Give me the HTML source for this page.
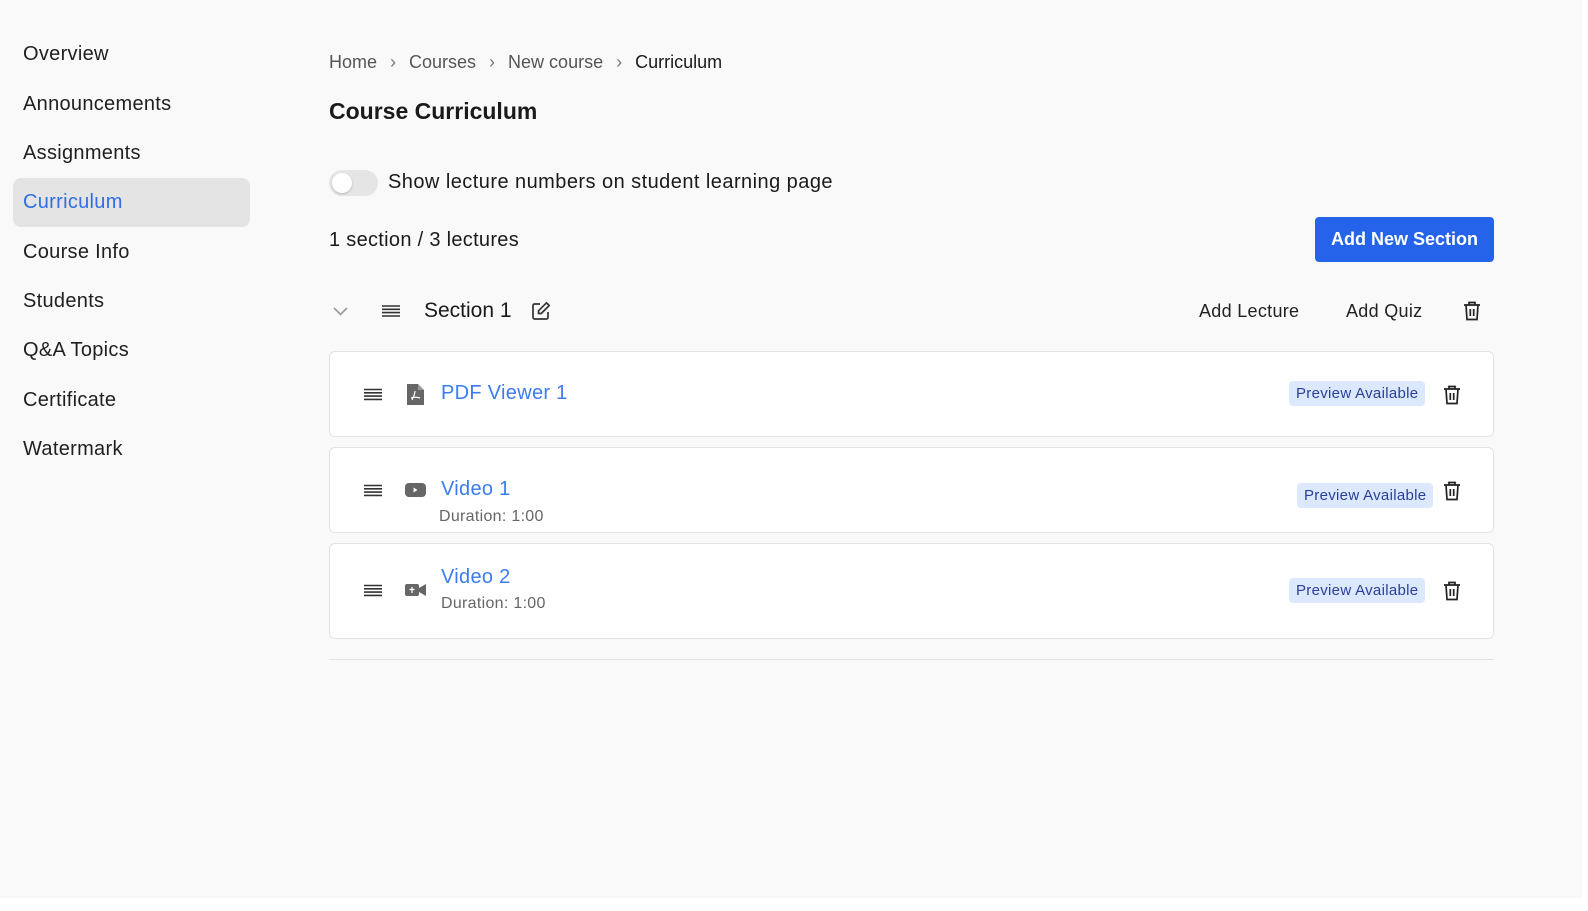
<!DOCTYPE html>
<html><head><meta charset="utf-8"><style>
*{box-sizing:border-box;margin:0;padding:0}
html,body{width:1588px;height:911px;background:#fff;font-family:"Liberation Sans",sans-serif;color:#1a1a1a;overflow:hidden}
#bg{position:absolute;left:0;top:0;width:1582px;height:898px;background:#f9f9f9}
.a{position:absolute;white-space:nowrap}
.nav{left:23px;font-size:20px;color:#1f1f1f;letter-spacing:0.3px}
.card{position:absolute;left:329px;width:1165px;background:#fff;border:1px solid #e3e3e3;border-radius:6px}
.badge{position:absolute;background:#dbe8fd;color:#2a3f9a;font-size:15px;padding:4px 7px;border-radius:4px;letter-spacing:0.3px}
.blue{color:#3b7cf0;letter-spacing:0.3px}
.gray{color:#666;letter-spacing:0.3px}
</style></head><body>
<div id="bg"></div>
<div class="a nav" style="top:43px">Overview</div>
<div class="a nav" style="top:93px">Announcements</div>
<div class="a nav" style="top:142px">Assignments</div>
<div class="a" style="left:13px;top:178px;width:237px;height:49px;background:#e4e4e4;border-radius:8px"></div>
<div class="a nav" style="top:191px;color:#2f6fe0">Curriculum</div>
<div class="a nav" style="top:241px">Course Info</div>
<div class="a nav" style="top:290px">Students</div>
<div class="a nav" style="top:339px">Q&amp;A Topics</div>
<div class="a nav" style="top:389px">Certificate</div>
<div class="a nav" style="top:438px">Watermark</div>

<div class="a" style="left:329px;top:52px;font-size:18px;color:#555">Home <span style="margin:0 8px;color:#777">›</span> Courses <span style="margin:0 8px;color:#777">›</span> New course <span style="margin:0 8px;color:#777">›</span> <span style="color:#1a1a1a">Curriculum</span></div>
<div class="a" style="left:329px;top:98px;font-size:23px;font-weight:bold">Course Curriculum</div>

<div class="a" style="left:329px;top:170px;width:49px;height:26px;border-radius:13px;background:#e5e5e5"></div>
<div class="a" style="left:332px;top:173px;width:20px;height:20px;border-radius:10px;background:#fff;box-shadow:0 1px 2px rgba(0,0,0,.2)"></div>
<div class="a" style="left:388px;top:171px;font-size:20px;letter-spacing:0.45px">Show lecture numbers on student learning page</div>
<div class="a" style="left:329px;top:229px;font-size:20px;letter-spacing:0.3px">1 section / 3 lectures</div>
<div class="a" style="left:1315px;top:217px;width:179px;height:45px;background:#2563eb;border-radius:4px;color:#fff;font-size:18px;font-weight:bold;text-align:center;line-height:45px">Add New Section</div>

<svg class="a" style="left:332px;top:305px" width="17" height="12"><path d="M2 3l6.5 6.5L15 3" stroke="#999" stroke-width="1.6" fill="none"/></svg>
<svg class="a" style="left:382px;top:304px" width="18" height="14"><path d="M0 2h18M0 5.3h18M0 8.6h18M0 12h18" stroke="#333" stroke-width="1.6"/></svg>
<div class="a" style="left:424px;top:299px;font-size:21px">Section 1</div>
<svg class="a" style="left:531px;top:301px" width="20" height="20" viewBox="0 0 20 20"><path d="M9 3H3.5a1.5 1.5 0 0 0-1.5 1.5v12a1.5 1.5 0 0 0 1.5 1.5h12a1.5 1.5 0 0 0 1.5-1.5V11" stroke="#333" stroke-width="1.7" fill="none"/><path d="M15.5 1.8l2.7 2.7-8 8H7.5V9.8z" stroke="#333" stroke-width="1.7" fill="none" stroke-linejoin="round"/></svg>
<div class="a" style="left:1199px;top:301px;font-size:18px;color:#222;letter-spacing:0.3px">Add Lecture</div>
<div class="a" style="left:1346px;top:301px;font-size:18px;color:#222;letter-spacing:0.3px">Add Quiz</div>
<svg class="a" style="left:1463px;top:301px" width="18" height="20" viewBox="0 0 18 20"><path d="M1 4h16M6 4V1.5h6V4M3 4l1 14.5h10L15 4M7.3 8v7M10.7 8v7" stroke="#222" stroke-width="1.7" fill="none"/></svg>

<div class="card" style="top:351px;height:86px"></div>
<div class="card" style="top:447px;height:86px"></div>
<div class="card" style="top:543px;height:96px"></div>

<svg class="a" style="left:364px;top:388px" width="18" height="13"><path d="M0 1.5h18M0 4.8h18M0 8.1h18M0 11.4h18" stroke="#333" stroke-width="1.6"/></svg>
<svg class="a" style="left:407px;top:384px" width="17" height="21" viewBox="0 0 17 21"><path d="M0 0h11l6 6v15H0z" fill="#666"/><path d="M11 0v6h6" fill="#999"/><path d="M5 16c2-4 3-7 3-9M4 14c3-1 6-1 9 0" stroke="#fff" stroke-width="1.2" fill="none"/></svg>
<div class="a blue" style="left:441px;top:382px;font-size:20px">PDF Viewer 1</div>
<div class="badge" style="left:1289px;top:381px">Preview Available</div>
<svg class="a" style="left:1443px;top:385px" width="18" height="20" viewBox="0 0 18 20"><path d="M1 4h16M6 4V1.5h6V4M3 4l1 14.5h10L15 4M7.3 8v7M10.7 8v7" stroke="#222" stroke-width="1.7" fill="none"/></svg>

<svg class="a" style="left:364px;top:484px" width="18" height="13"><path d="M0 1.5h18M0 4.8h18M0 8.1h18M0 11.4h18" stroke="#333" stroke-width="1.6"/></svg>
<svg class="a" style="left:405px;top:483px" width="21" height="14" viewBox="0 0 21 14"><rect width="21" height="14" rx="4" fill="#666"/><path d="M8.5 4.5v5l4-2.5z" fill="#fff"/></svg>
<div class="a blue" style="left:441px;top:478px;font-size:20px">Video 1</div>
<div class="a gray" style="left:439px;top:508px;font-size:16px">Duration: 1:00</div>
<div class="badge" style="left:1297px;top:483px">Preview Available</div>
<svg class="a" style="left:1443px;top:481px" width="18" height="20" viewBox="0 0 18 20"><path d="M1 4h16M6 4V1.5h6V4M3 4l1 14.5h10L15 4M7.3 8v7M10.7 8v7" stroke="#222" stroke-width="1.7" fill="none"/></svg>

<svg class="a" style="left:364px;top:584px" width="18" height="13"><path d="M0 1.5h18M0 4.8h18M0 8.1h18M0 11.4h18" stroke="#333" stroke-width="1.6"/></svg>
<svg class="a" style="left:405px;top:583px" width="21" height="14" viewBox="0 0 21 14"><rect x="0" y="1" width="14" height="12" rx="2" fill="#666"/><path d="M14 5l7-4v12l-7-4z" fill="#666"/><path d="M7 4v6M4.5 6.5h5" stroke="#fff" stroke-width="1.3"/></svg>
<div class="a blue" style="left:441px;top:566px;font-size:20px">Video 2</div>
<div class="a gray" style="left:441px;top:595px;font-size:16px">Duration: 1:00</div>
<div class="badge" style="left:1289px;top:578px">Preview Available</div>
<svg class="a" style="left:1443px;top:581px" width="18" height="20" viewBox="0 0 18 20"><path d="M1 4h16M6 4V1.5h6V4M3 4l1 14.5h10L15 4M7.3 8v7M10.7 8v7" stroke="#222" stroke-width="1.7" fill="none"/></svg>

<div class="a" style="left:329px;top:659px;width:1165px;height:1px;background:#e3e3e3"></div>
</body></html>
